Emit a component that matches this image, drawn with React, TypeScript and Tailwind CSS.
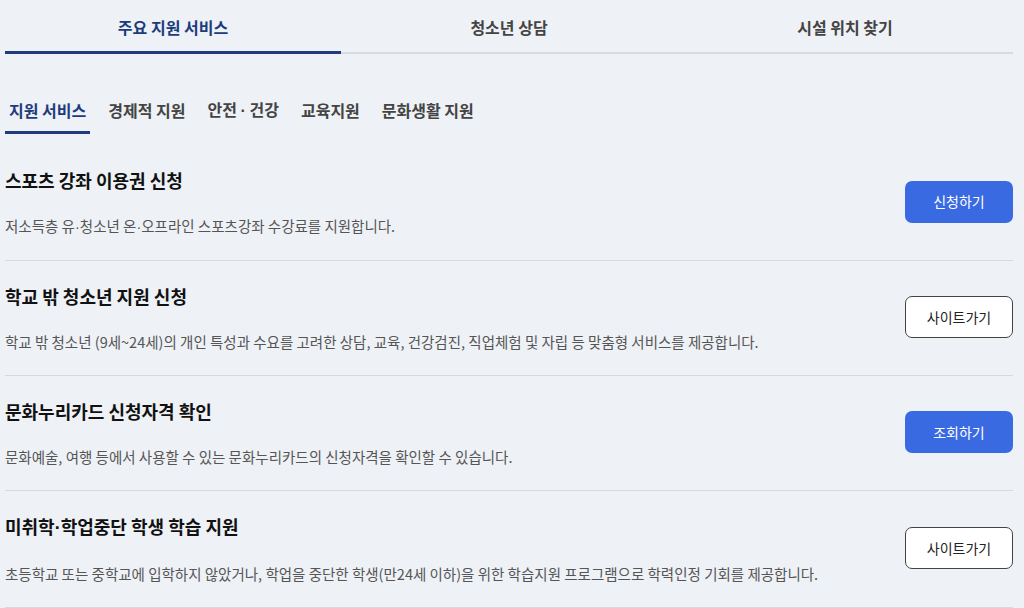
const topTabs = ["주요 지원 서비스", "청소년 상담", "시설 위치 찾기"];

const Dot = () => <span className="font-['Liberation_Sans']">·</span>;

const subTabs = [
  <>지원 서비스</>,
  <>경제적 지원</>,
  <>
    안전 <Dot /> 건강
  </>,
  <>교육지원</>,
  <>문화생활 지원</>,
];

const services = [
  {
    id: "sports",
    title: <>스포츠 강좌 이용권 신청</>,
    desc: (
      <>
        저소득층 유<Dot />청소년 온<Dot />오프라인 스포츠강좌 수강료를 지원합니다.
      </>
    ),
    action: "신청하기",
    primary: true,
  },
  {
    id: "outside",
    title: <>학교 밖 청소년 지원 신청</>,
    desc: (
      <>
        학교 밖 청소년 (9세~24세)의 개인 특성과 수요를 고려한 상담, 교육, 건강검진, 직업체험 및 자립 등 맞춤형
        서비스를 제공합니다.
      </>
    ),
    action: "사이트가기",
    primary: false,
  },
  {
    id: "nuri",
    title: <>문화누리카드 신청자격 확인</>,
    desc: <>문화예술, 여행 등에서 사용할 수 있는 문화누리카드의 신청자격을 확인할 수 있습니다.</>,
    action: "조회하기",
    primary: true,
  },
  {
    id: "study",
    title: (
      <>
        미취학<Dot />학업중단 학생 학습 지원
      </>
    ),
    desc: (
      <>
        초등학교 또는 중학교에 입학하지 않았거나, 학업을 중단한 학생(만24세 이하)을 위한 학습지원 프로그램으로
        학력인정 기회를 제공합니다.
      </>
    ),
    action: "사이트가기",
    primary: false,
  },
];

export default function App() {
  return (
    <div
      className="min-h-screen bg-[#eef1f6] pl-[5px] pr-[11px] overflow-hidden"
      style={{ fontFamily: '"Noto Sans CJK KR", "Noto Sans", sans-serif' }}
    >
      {/* top tabs */}
      <nav className="grid grid-cols-3 border-b-2 border-[#d8dbe0]">
        {topTabs.map((t, i) => (
          <button
            key={t}
            className={
              "pt-[15px] pb-[12px] -mb-[2px] border-b-[3px] text-[16px] font-bold leading-6 " +
              (i === 0 ? "border-[#1d3c7c] text-[#1d3c7c]" : "border-transparent text-[#444]")
            }
          >
            {t}
          </button>
        ))}
      </nav>

      {/* sub tabs */}
      <div className="flex gap-[14px] mt-[43px]">
        {subTabs.map((t, i) => (
          <button
            key={i}
            className={
              "px-1 pb-[8px] border-b-[3px] text-[16px] font-bold leading-6 whitespace-nowrap " +
              (i === 0 ? "border-[#1d3c7c] text-[#1d3c7c]" : "border-transparent text-[#444]")
            }
          >
            {t}
          </button>
        ))}
      </div>

      {/* service list */}
      <ul className="mt-[11px]">
        {services.map((s) => (
          <li
            key={s.id}
            className="flex items-center justify-between pt-[21px] pb-[23px] border-b border-[#d6d9de]"
          >
            <div className="flex flex-col gap-[22px]">
              <h3 className="text-[18px] font-bold leading-7 text-[#111] whitespace-nowrap">{s.title}</h3>
              <p className="text-[14.5px] leading-5 text-[#555] whitespace-nowrap">{s.desc}</p>
            </div>
            <button
              className={
                "w-[108px] h-[42px] rounded-[7px] text-[14px] shrink-0 " +
                (s.primary ? "bg-[#3a6ae2] text-white" : "bg-white text-[#222] border border-[#444]")
              }
            >
              {s.action}
            </button>
          </li>
        ))}
      </ul>
    </div>
  );
}
